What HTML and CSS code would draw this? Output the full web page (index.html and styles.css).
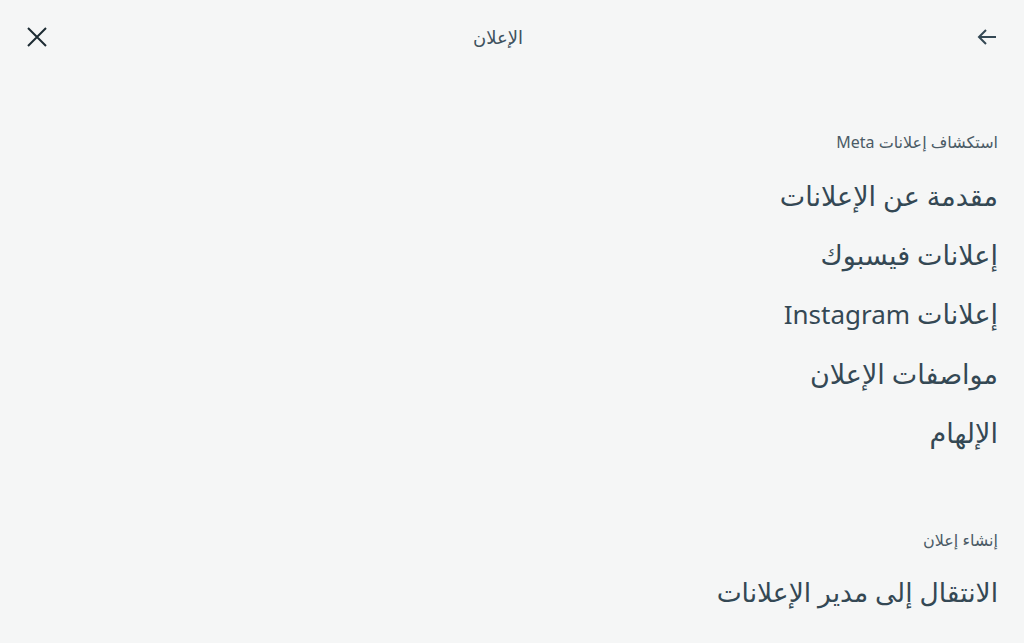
FILE: index.html
```html
<!DOCTYPE html>
<html lang="ar" dir="rtl">
<head>
<meta charset="utf-8">
<link rel="stylesheet" href="styles.css">
</head>
<body>
<header class="topbar">
  <button class="icon-btn back" aria-label="رجوع">
    <svg width="22" height="22" viewBox="0 0 22 22"><path d="M20 11H3M10 4l-7 7 7 7" fill="none" stroke="#344854" stroke-width="2"/></svg>
  </button>
  <div class="title">الإعلان</div>
  <button class="icon-btn close" aria-label="إغلاق">
    <svg width="22" height="22" viewBox="0 0 22 22"><path d="M2 2l18 18M20 2L2 20" fill="none" stroke="#1c2b33" stroke-width="2"/></svg>
  </button>
</header>
<main class="menu">
  <section class="group">
    <h2 class="group-title">استكشاف إعلانات Meta</h2>
    <ul class="items">
      <li>مقدمة عن الإعلانات</li>
      <li>إعلانات فيسبوك</li>
      <li>إعلانات <span class="latin">Instagram</span></li>
      <li>مواصفات الإعلان</li>
      <li>الإلهام</li>
    </ul>
  </section>
  <section class="group">
    <h2 class="group-title">إنشاء إعلان</h2>
    <ul class="items">
      <li class="compact">الانتقال إلى مدير الإعلانات</li>
    </ul>
  </section>
</main>
</body>
</html>
```
FILE: styles.css
```css
html, body {
  margin: 0;
  padding: 0;
  background: #f5f6f6;
  font-family: "Noto Sans", "DejaVu Sans", sans-serif;
  color: #344854;
}
.topbar {
  height: 74px;
  display: flex;
  align-items: center;
  justify-content: space-between;
  padding: 0 26px;
}
.icon-btn {
  background: none;
  border: 0;
  padding: 0;
  width: 22px;
  height: 22px;
  display: flex;
}
.title {
  font-size: 18px;
  color: #3f525e;
  margin-right: 28px;
}
.menu {
  padding: 56px 26px 0;
}
.group {
  margin-bottom: 66px;
}
.group:last-child {
  margin-bottom: 0;
}
.group-title {
  margin: 0 0 12px;
  font-size: 16px;
  font-weight: normal;
  color: #4b5b66;
  line-height: 24px;
}
.items {
  list-style: none;
  margin: 0;
  padding: 0;
}
.items li {
  font-size: 27px;
  line-height: 59px;
  color: #344854;
}
.items li.compact {
  font-size: 26.5px;
  line-height: 56px;
}
.latin {
  font-size: 26px;
}
```
